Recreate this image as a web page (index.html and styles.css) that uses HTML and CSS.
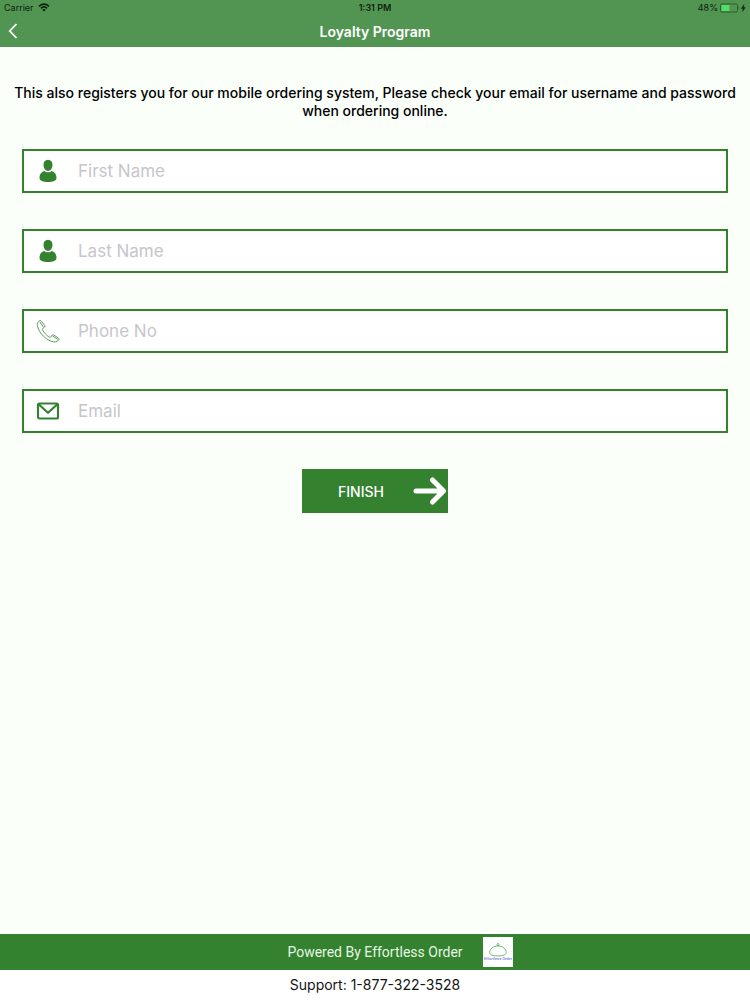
FILE: index.html
```html
<!DOCTYPE html>
<html lang="en">
<head>
  <meta charset="UTF-8">
  <meta name="viewport" content="width=device-width, initial-scale=1.0">
  <title>Loyalty Program</title>
  <link rel="stylesheet" href="styles.css">
</head>
<body>

<header class="header">
  <div class="status">
    <div class="status-left">
      <span>Carrier</span>
      <svg width="12" height="9" viewBox="0 0 12 9" fill="none" stroke="#0c240c" stroke-width="1.6">
        <path d="M1 3.3 Q6 -1 11 3.3"/>
        <path d="M2.9 5.3 Q6 2.6 9.1 5.3"/>
        <path d="M6 8.6 L4.2 6.8 Q6 5.4 7.8 6.8 Z" fill="#0c240c" stroke="none"/>
      </svg>
    </div>
    <span class="time">1:31 PM</span>
    <div class="status-right">
      <span>48%</span>
      <svg width="26" height="10" viewBox="0 0 26 10">
        <rect x="0.5" y="1" width="17" height="8" rx="1.5" fill="none" stroke="#2c612b"/>
        <rect x="1.5" y="2" width="8" height="6" fill="#55dc68"/>
        <path d="M18.5 3.5 Q20 5 18.5 6.5 Z" fill="#2c612b"/>
        <path d="M24 1.5 L21.3 5.4 H23.2 L22.4 8.5 L25.4 4.5 H23.4 Z" fill="#0c240c" stroke="#0c240c" stroke-width="0.4"/>
      </svg>
    </div>
  </div>
  <div class="navbar">
    <button class="back" type="button" aria-label="Back">
      <svg width="10" height="16" viewBox="0 0 10 16" fill="none" stroke="#fff" stroke-width="1.8">
        <path d="M8.5 1 L1.8 8 L8.5 15"/>
      </svg>
    </button>
    <h1>Loyalty Program</h1>
  </div>
</header>

<main class="content">
  <p class="intro">This also registers you for our mobile ordering system, Please check your email for username and password when ordering online.</p>

  <form class="form">
    <label class="field">
      <svg class="icon" viewBox="0 0 24 24" fill="#34812f">
        <path d="M12 0.8 C15 0.8 16.6 2.9 16.5 5.9 C16.4 9.1 14.5 11.8 12 11.8 C9.5 11.8 7.6 9.1 7.5 5.9 C7.4 2.9 9 0.8 12 0.8 Z"/>
        <path d="M8.2 11.9 C10 13.6 14 13.6 15.8 11.9 C18.7 12.7 20.5 15.2 20.5 18.7 C20.5 22 16.8 22.9 12 22.9 C7.2 22.9 3.5 22 3.5 18.7 C3.5 15.2 5.3 12.7 8.2 11.9 Z"/>
      </svg>
      <input type="text" placeholder="First Name" aria-label="First Name">
    </label>

    <label class="field">
      <svg class="icon" viewBox="0 0 24 24" fill="#34812f">
        <path d="M12 0.8 C15 0.8 16.6 2.9 16.5 5.9 C16.4 9.1 14.5 11.8 12 11.8 C9.5 11.8 7.6 9.1 7.5 5.9 C7.4 2.9 9 0.8 12 0.8 Z"/>
        <path d="M8.2 11.9 C10 13.6 14 13.6 15.8 11.9 C18.7 12.7 20.5 15.2 20.5 18.7 C20.5 22 16.8 22.9 12 22.9 C7.2 22.9 3.5 22 3.5 18.7 C3.5 15.2 5.3 12.7 8.2 11.9 Z"/>
      </svg>
      <input type="text" placeholder="Last Name" aria-label="Last Name">
    </label>

    <label class="field">
      <svg class="icon" viewBox="0 0 24 24" fill="none" stroke="#4f8f4d" stroke-width="0.9" stroke-linejoin="round">
        <path d="M3.5 1.8 C1 3 0.7 5.8 2 9 C4.3 14.8 9.3 20 15 22.2 C18.4 23.5 21.4 23.2 22.7 20.8 C23.1 20 22.9 19.4 22.2 18.9 L17.9 16.1 C17.1 15.6 16.4 15.8 15.9 16.5 L14.9 17.9 C14.4 18.5 13.8 18.5 13.1 18.1 C10.4 16.3 8.1 13.9 6.6 11.1 C6.2 10.4 6.3 9.8 6.9 9.4 L8.3 8.4 C8.9 7.9 9.1 7.2 8.7 6.5 L5.4 2.2 C4.9 1.5 4.3 1.4 3.5 1.8 Z"/>
        <path d="M3.9 2.8 L7.5 8.3 M16.4 16.9 L21.9 20.3"/>
      </svg>
      <input type="tel" placeholder="Phone No" aria-label="Phone No">
    </label>

    <label class="field">
      <svg class="icon" viewBox="0 0 24 24" fill="none" stroke="#34812f" stroke-width="2.2" stroke-linejoin="round">
        <rect x="2" y="4.5" width="20" height="15" rx="1.5"/>
        <path d="M2.6 5.2 L12 13.8 L21.4 5.2"/>
      </svg>
      <input type="email" placeholder="Email" aria-label="Email">
    </label>

    <button class="finish" type="submit">
      <span>FINISH</span>
      <svg width="34" height="28" viewBox="0 0 34 28" fill="none" stroke="#fff" stroke-width="5" stroke-linecap="round" stroke-linejoin="round">
        <path d="M3 14 H30 M19.5 3 L30.5 14 L19.5 25"/>
      </svg>
    </button>
  </form>
</main>

<footer>
  <div class="powered">
    <span>Powered By Effortless Order</span>
    <svg class="logo" viewBox="0 0 30 30">
      <rect width="30" height="30" fill="#fff"/>
      <g fill="none" stroke="#57a455" stroke-width="0.8">
        <path d="M8.5 18 C5.8 16.5 6.3 13.5 9 11 C12 8.3 18 8.3 21 11 C23.7 13.5 24.2 16.5 21.5 18 C18 19.3 12 19.3 8.5 18 Z"/>
        <circle cx="15" cy="7.6" r="1.1"/>
      </g>
      <text x="15" y="23" text-anchor="middle" class="logo-text">Effortless Order</text>
    </svg>
  </div>
  <p class="support">Support: 1-877-322-3528</p>
</footer>

</body>
</html>
```
FILE: styles.css
```css
* {
  box-sizing: border-box;
}
body {
  margin: 0;
  min-height: 100vh;
  display: flex;
  flex-direction: column;
  font-family: Inter, "Liberation Sans", sans-serif;
  background-color: #fafffa;
}
.header {
  height: 47px;
  background-color: #529552;
}
.status {
  display: grid;
  grid-template-columns: 1fr auto 1fr;
  align-items: center;
  height: 15px;
  padding: 0 4px;
  font-size: 9px;
  color: #0c240c;
}
.status-left,
.status-right {
  display: flex;
  align-items: center;
  gap: 4px;
}
.status-right {
  justify-content: flex-end;
  gap: 2px;
}
.time {
  font-weight: 600;
}
.navbar {
  display: grid;
  grid-template-columns: 1fr auto 1fr;
  align-items: center;
  height: 32px;
  padding: 0 8px;
}
.back {
  justify-self: start;
  display: flex;
  padding: 0;
  border: none;
  background: none;
  cursor: pointer;
}
h1 {
  margin: 0;
  font-size: 14px;
  font-weight: 600;
  color: #fff;
}
.content {
  flex: 1;
  padding: 37px 12px;
}
.intro {
  margin: 0;
  font-size: 14px;
  font-weight: 500;
  line-height: 18px;
  text-align: center;
  color: #000;
}
.form {
  display: flex;
  flex-direction: column;
  gap: 36px;
  padding: 29px 10px;
}
.field {
  display: flex;
  align-items: center;
  gap: 18px;
  height: 44px;
  padding: 0 12px;
  border: 2px solid #34812f;
  background-color: #fff;
}
.icon {
  width: 24px;
  height: 24px;
  flex: none;
}
.field input {
  flex: 1;
  min-width: 0;
  padding: 0;
  border: none;
  outline: none;
  background: none;
  font-family: inherit;
  font-size: 17px;
}
.field input::placeholder {
  color: #c6c6ca;
}
.finish {
  align-self: center;
  display: flex;
  align-items: center;
  justify-content: space-between;
  width: 146px;
  height: 44px;
  padding: 0 1px 0 36px;
  border: none;
  background-color: #34812f;
  color: #fff;
  font-family: inherit;
  font-size: 14px;
  font-weight: 500;
  cursor: pointer;
}
.powered {
  display: flex;
  align-items: center;
  justify-content: center;
  gap: 20px;
  height: 36px;
  padding-left: 50px;
  background-color: #34812f;
  color: #e6f7e4;
  font-family: Roboto, "Liberation Sans", sans-serif;
  font-size: 14px;
}
.logo {
  width: 30px;
  height: 30px;
}
.logo-text {
  font-size: 4px;
  fill: #4a52d8;
}
.support {
  margin: 0;
  background-color: #fff;
  font-size: 14px;
  line-height: 30px;
  text-align: center;
  color: #141414;
}
```
